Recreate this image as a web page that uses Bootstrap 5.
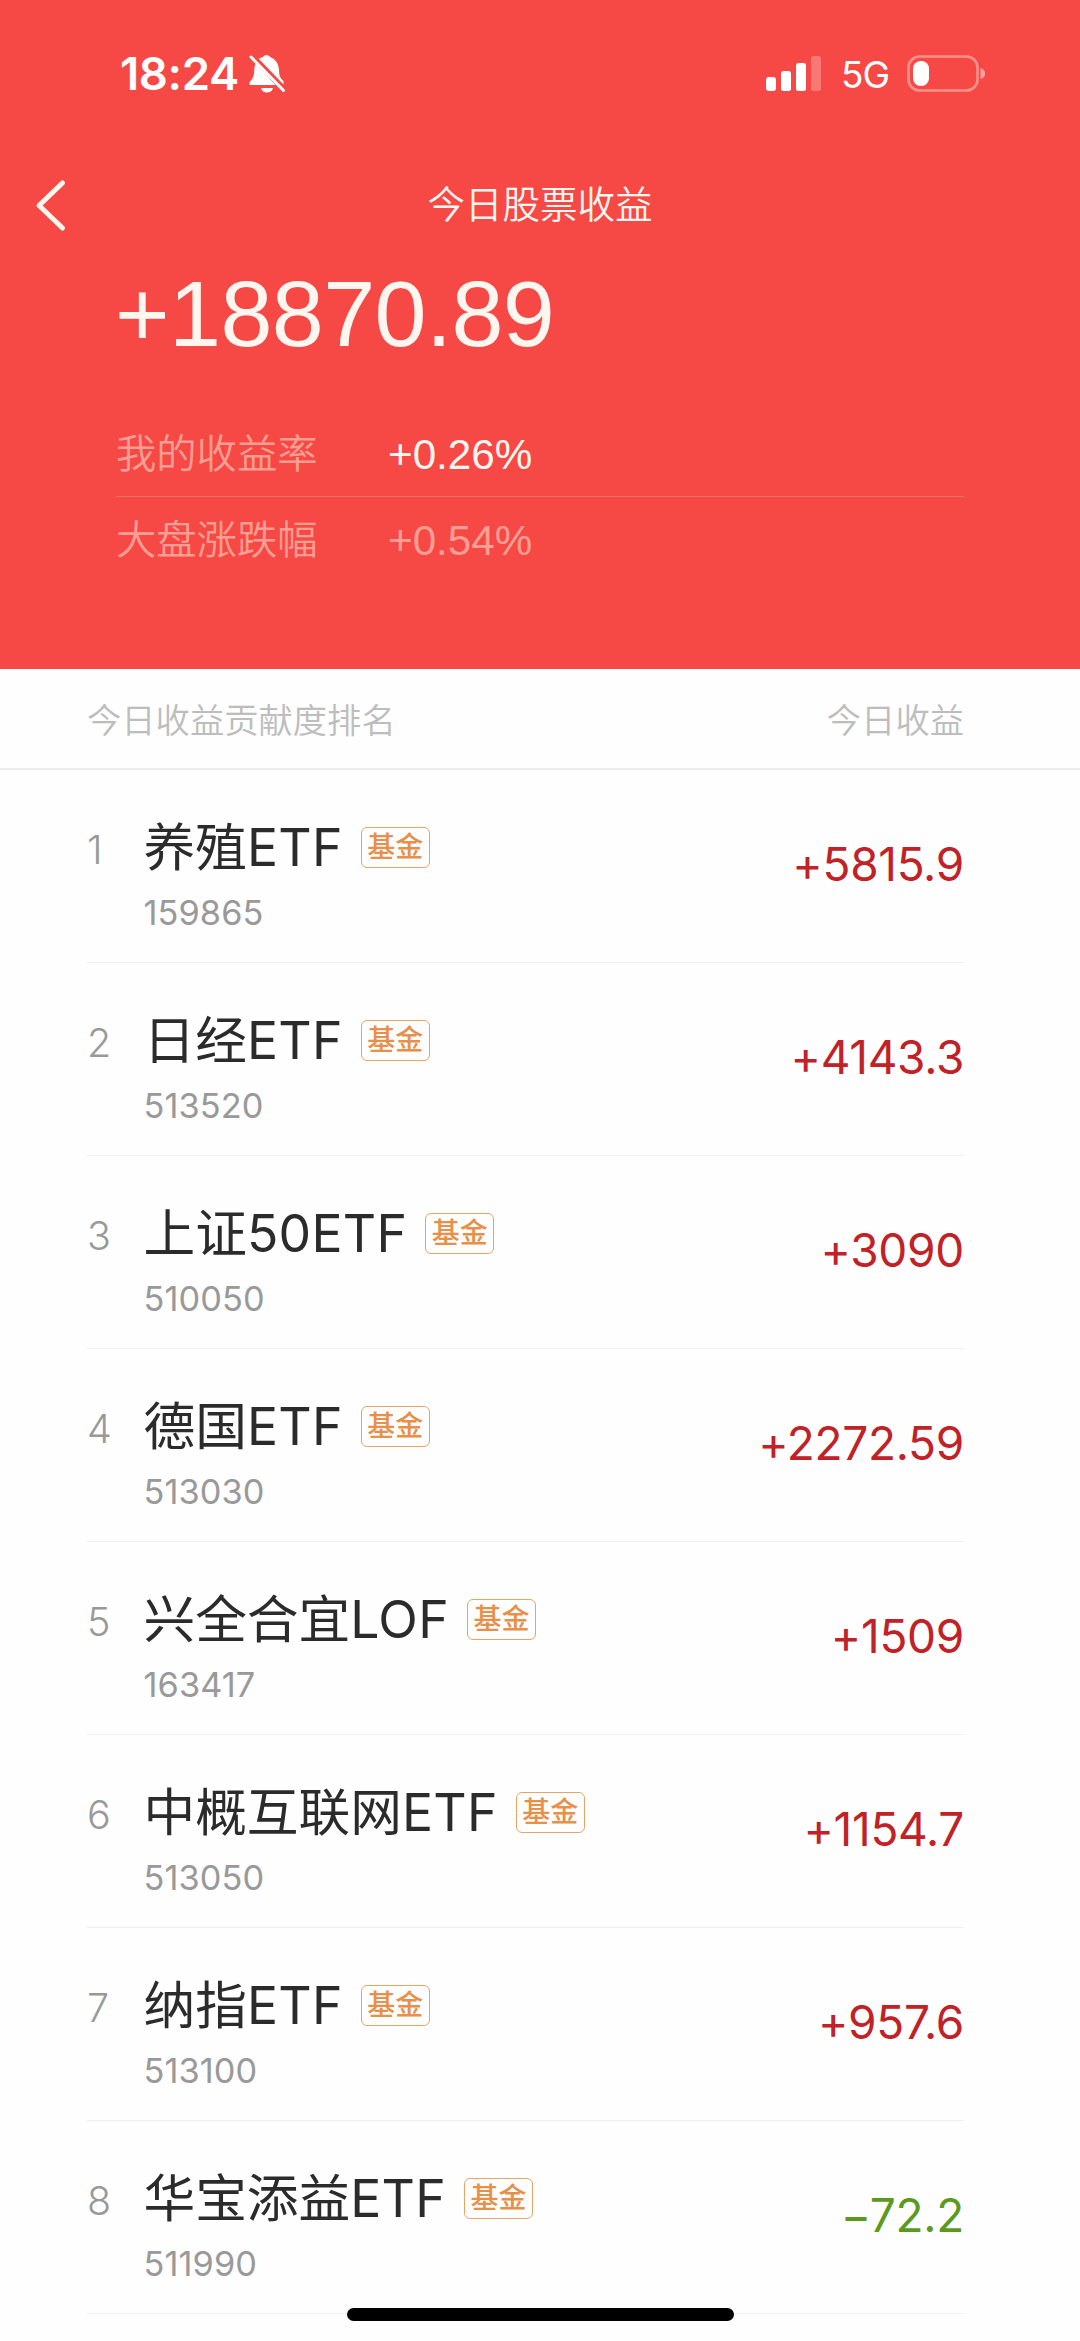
<!DOCTYPE html>
<html lang="zh-CN">
<head>
<meta charset="utf-8">
<meta name="viewport" content="width=device-width, initial-scale=1">
<title>今日股票收益</title>
<link href="https://cdn.jsdelivr.net/npm/bootstrap@5.3.0/dist/css/bootstrap.min.css" rel="stylesheet">
<style>
  body { font-family: Inter, "Noto Sans CJK SC", sans-serif; font-feature-settings: "calt" 0; background: #fefefe; color: #2b2b2b; height: 2341px; overflow: hidden; }
  .hero { background: #f64945; height: 669px; color: #fff6f0; font-family: "Liberation Sans", "Noto Sans CJK SC", sans-serif; }
  .statusbar { height: 148px; padding: 0 95px 0 120px; font-family: Inter, sans-serif; color: #fff; }
  .clock { font-size: 45.5px; font-weight: 600; line-height: 60px; letter-spacing: -.4px; }
  .network { font-size: 37px; line-height: 60px; letter-spacing: -1px; padding: 1px 18px 0 19px; }
  .titlebar { height: 112px; padding: 1px 33px 0; }
  .page-title { font-size: 37.5px; line-height: 56px; font-weight: 350; }
  .side { width: 40px; }
  .total { padding: 0 0 0 115px; font-size: 93.5px; line-height: 108px; height: 110px; letter-spacing: -.6px; }
  .rates { margin: 40px 116px 0; font-size: 42.2px; }
  .rate-row { height: 85.5px; padding-top: 3px; }
  .rate-row + .rate-row { border-top: 1px solid #fb6e68; color: #ff9e92; }
  .rate-name { width: 272px; font-size: 40.3px; font-weight: 350; color: #ff9e92; padding-top: 2px; }
  .listhead { height: 101px; padding: 4px 116px 0 87px; font-size: 34.3px; font-weight: 350; color: #bdbdbd; border-bottom: 2px solid #ededed; }
  .stocks { margin: 0 116px 0 87px; }
  .stock { height: 193px; border-bottom: 1px solid #f0f0f0; }
  .rank { width: 56.5px; font-size: 39.5px; font-weight: 350; line-height: 50px; color: #999; padding-top: 55px; }
  .fund { font-size: 51.7px; font-weight: 400; line-height: 64px; padding-top: 45px; }
  .latin { letter-spacing: .3px; font-weight: 380; }
  .kind { width: 69px; height: 41px; border: 1.5px solid #e6a566; border-radius: 6px; color: #e6904a; font-size: 28px; line-height: 39px; margin-left: 18px; font-weight: 500; }
  .code { font-size: 34.3px; font-weight: 370; line-height: 40px; color: #999; padding-top: 14px; letter-spacing: .1px; }
  .gain { font-size: 46px; font-weight: 390; line-height: 60px; color: #c02227; letter-spacing: -.3px; padding-top: 64px; }
  .loss { color: #5c9a1e; }
  .homebar { width: 387px; height: 13px; border-radius: 7px; background: #000; bottom: 20px; left: 347px; }
</style>
<script src="https://cdn.jsdelivr.net/npm/bootstrap@5.3.0/dist/js/bootstrap.bundle.min.js"></script>
</head>
<body class="position-relative">
<header class="hero">
  <div class="statusbar d-flex justify-content-between align-items-center">
    <div class="d-flex align-items-center">
      <span class="clock">18:24</span>
      <svg class="ms-2" width="39" height="40" viewBox="-2 0 39 40" fill="none">
        <path d="M10 5C11 4 12 3.500 14 3C14.500 .5 20.500 .5 21 3C27 5 29.500 10 30 16C30.300 22 31 24 34.500 27V30.500ZM7 9.500L26.500 31H2C0 31 0 28.500 1.500 27C5 23.500 5 20 5.300 15C5.500 13 6 11 7 9.500ZM12 34H24C23 40 13 40 12 34Z" fill="#fff"/>
        <path d="M2 3L34.500 36.500" stroke="#fff" stroke-width="3" stroke-linecap="round"/>
      </svg>
    </div>
    <div class="d-flex align-items-center">
      <svg width="56" height="36" viewBox="0 0 56 36" fill="#fff">
        <rect y="21" width="10" height="14" rx="3"/><rect x="15" y="15" width="10" height="20" rx="2.500"/><rect x="30" y="7" width="10" height="28" rx="2.500"/><rect x="45" y="0" width="10" height="35" rx="2.500" opacity=".26"/>
      </svg>
      <span class="network">5G</span>
      <svg width="78" height="38" viewBox="0 0 78 38" fill="none">
        <rect x="1.500" y="1.500" width="69" height="34" rx="11" stroke="#ff918b" stroke-width="2.600"/>
        <rect x="6" y="6" width="16" height="25" rx="7.500" fill="#fff"/><path d="M73.500 13Q78 14 78 18.500T73.500 24Z" fill="#ffa29d"/>
      </svg>
    </div>
  </div>
  <div class="titlebar d-flex justify-content-between align-items-center">
    <svg class="side" width="40" height="56" viewBox="0 0 40 56" fill="none"><path d="M29.500 6L6 28.500L29.500 51" stroke="#fff6ee" stroke-width="5" stroke-linecap="round" stroke-linejoin="round"/></svg>
    <span class="page-title">今日股票收益</span>
    <span class="side"></span>
  </div>
  <div class="total">+18870.89</div>
  <div class="rates">
    <div class="rate-row d-flex align-items-center"><span class="rate-name">我的收益率</span><span>+0.26%</span></div>
    <div class="rate-row d-flex align-items-center"><span class="rate-name">大盘涨跌幅</span><span>+0.54%</span></div>
  </div>
</header>
<div class="listhead d-flex justify-content-between align-items-center"><span>今日收益贡献度排名</span><span>今日收益</span></div>
<main class="stocks">
  <div class="stock d-flex"><span class="rank">1</span><div class="flex-grow-1"><div class="fund d-flex align-items-center">养殖<span class="latin">ETF</span><span class="kind text-center">基金</span></div><div class="code">159865</div></div><span class="gain">+5815.9</span></div>
  <div class="stock d-flex"><span class="rank">2</span><div class="flex-grow-1"><div class="fund d-flex align-items-center">日经<span class="latin">ETF</span><span class="kind text-center">基金</span></div><div class="code">513520</div></div><span class="gain">+4143.3</span></div>
  <div class="stock d-flex"><span class="rank">3</span><div class="flex-grow-1"><div class="fund d-flex align-items-center">上证<span class="latin">50ETF</span><span class="kind text-center">基金</span></div><div class="code">510050</div></div><span class="gain">+3090</span></div>
  <div class="stock d-flex"><span class="rank">4</span><div class="flex-grow-1"><div class="fund d-flex align-items-center">德国<span class="latin">ETF</span><span class="kind text-center">基金</span></div><div class="code">513030</div></div><span class="gain">+2272.59</span></div>
  <div class="stock d-flex"><span class="rank">5</span><div class="flex-grow-1"><div class="fund d-flex align-items-center">兴全合宜<span class="latin">LOF</span><span class="kind text-center">基金</span></div><div class="code">163417</div></div><span class="gain">+1509</span></div>
  <div class="stock d-flex"><span class="rank">6</span><div class="flex-grow-1"><div class="fund d-flex align-items-center">中概互联网<span class="latin">ETF</span><span class="kind text-center">基金</span></div><div class="code">513050</div></div><span class="gain">+1154.7</span></div>
  <div class="stock d-flex"><span class="rank">7</span><div class="flex-grow-1"><div class="fund d-flex align-items-center">纳指<span class="latin">ETF</span><span class="kind text-center">基金</span></div><div class="code">513100</div></div><span class="gain">+957.6</span></div>
  <div class="stock d-flex"><span class="rank">8</span><div class="flex-grow-1"><div class="fund d-flex align-items-center">华宝添益<span class="latin">ETF</span><span class="kind text-center">基金</span></div><div class="code">511990</div></div><span class="gain loss">−72.2</span></div>
</main>
<div class="homebar position-absolute"></div>
</body>
</html>
